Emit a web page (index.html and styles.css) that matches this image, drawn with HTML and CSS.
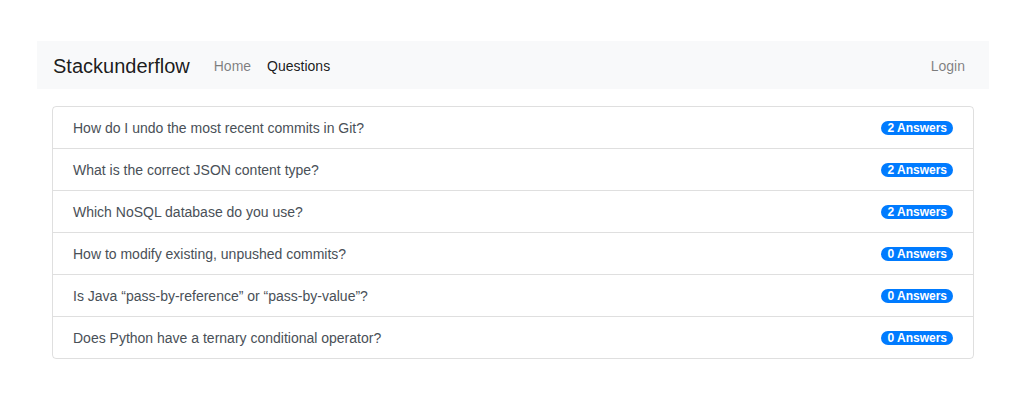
FILE: index.html
```html
<!DOCTYPE html>
<html>
<head>
<meta charset="utf-8">
<link rel="stylesheet" href="styles.css">
</head>
<body>
<div class="page">
  <nav class="navbar">
    <span class="brand">Stackunderflow</span>
    <a class="nav-link">Home</a>
    <a class="nav-link active">Questions</a>
    <span class="spacer"></span>
    <a class="nav-link">Login</a>
  </nav>
  <div class="content">
    <ul class="list-group">
      <li class="item"><span>How do I undo the most recent commits in Git?</span><span class="badge">2 Answers</span></li>
      <li class="item"><span>What is the correct JSON content type?</span><span class="badge">2 Answers</span></li>
      <li class="item"><span>Which NoSQL database do you use?</span><span class="badge">2 Answers</span></li>
      <li class="item"><span>How to modify existing, unpushed commits?</span><span class="badge">0 Answers</span></li>
      <li class="item"><span>Is Java “pass-by-reference” or “pass-by-value”?</span><span class="badge">0 Answers</span></li>
      <li class="item"><span>Does Python have a ternary conditional operator?</span><span class="badge">0 Answers</span></li>
    </ul>
  </div>
</div>
</body>
</html>
```
FILE: styles.css
```css
html, body {
  margin: 0;
  padding: 0;
  background: #fff;
  font-family: "Liberation Sans", Arial, sans-serif;
  font-size: 14px;
  color: #212529;
}
.page {
  width: 952px;
  margin: 41px 0 0 37px;
}
.navbar {
  display: flex;
  align-items: center;
  height: 48px;
  background: #f8f9fa;
  padding: 2px 24px 0 16px;
  box-sizing: border-box;
}
.brand {
  font-size: 20px;
  color: rgba(0,0,0,0.9);
  margin-right: 16px;
}
.nav-link {
  font-size: 14px;
  color: rgba(0,0,0,0.5);
  padding: 0 8px;
}
.nav-link:last-child { padding-right: 0; }
.nav-link.active { color: rgba(0,0,0,0.9); }
.spacer { flex: 1; }
.content {
  padding: 17px 15px 0 15px;
}
.list-group {
  list-style: none;
  margin: 0;
  padding: 0;
  border: 1px solid rgba(0,0,0,0.125);
  border-radius: 4px;
}
.item {
  display: flex;
  align-items: center;
  justify-content: space-between;
  height: 41px;
  padding: 0 20px;
  color: #495057;
  font-size: 14px;
  border-top: 1px solid rgba(0,0,0,0.125);
}
.item:first-child { border-top: none; }
.badge {
  background: #007bff;
  color: #fff;
  font-size: 12px;
  font-weight: bold;
  border-radius: 10px;
  padding: 1px 6px;
  line-height: 12px;
}
```
